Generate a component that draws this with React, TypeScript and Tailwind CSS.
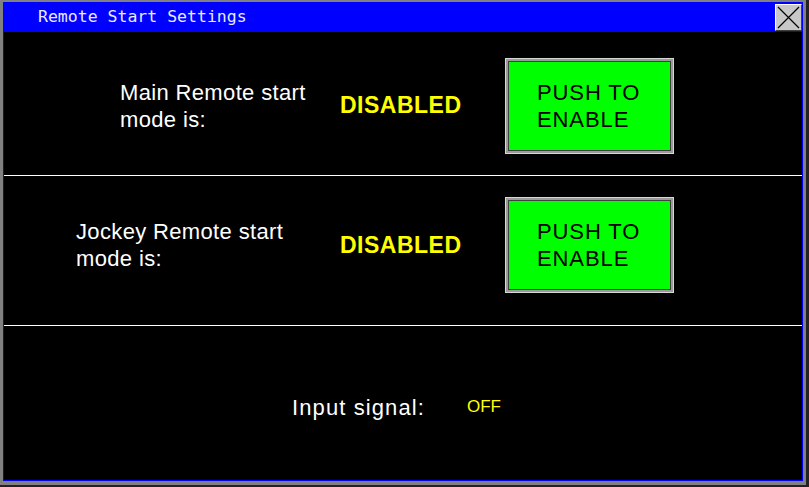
import React from "react";

function EnableButton() {
  return (
    <div className="w-[169px] h-[96px] border border-[#d8d8d8] bg-[#9a9a9a] p-[2px]">
      <div className="w-full h-full border border-[#404040] bg-[#00ff00] flex items-center pl-[28px]">
        <div
          className="text-black text-[22px] leading-[27px] tracking-[0.9px]"
          style={{ fontFamily: '"Liberation Sans", Arial, sans-serif' }}
        >
          PUSH TO
          <br />
          ENABLE
        </div>
      </div>
    </div>
  );
}

function ModeRow({
  lines,
  labelPad,
  labelWidth,
  className,
}: {
  lines: [string, string];
  labelPad: string;
  labelWidth: string;
  className: string;
}) {
  return (
    <div className={`flex items-center ${className}`}>
      <div className={`${labelPad} ${labelWidth} text-white text-[22px] leading-[27px] tracking-[0.35px]`}>
        {lines[0]}
        <br />
        {lines[1]}
      </div>
      <div className="w-[165px] text-[#ffff00] font-bold text-[23px] tracking-[0.5px]">DISABLED</div>
      <EnableButton />
    </div>
  );
}

export default function App() {
  return (
    <div
      className="w-[809px] h-[487px] bg-[#222222]"
      style={{ fontFamily: '"Liberation Sans", Arial, sans-serif' }}
    >
      <div className="w-[806px] h-[485px] border-x-[3px] border-t-[2px] border-b-[4px] border-[#808080]">
        <div className="w-full h-full border border-[#0000ff] bg-black flex flex-col">
          {/* Title bar */}
          <div className="h-[29px] bg-[#0000ff] flex items-center justify-between shrink-0">
            <span
              className="pl-[34px] text-[#e8e8ff] text-[16.5px]"
              style={{ fontFamily: '"DejaVu Sans Mono", monospace' }}
            >
              Remote Start Settings
            </span>
            <div className="w-[27px] h-[27px] bg-[#c8c8c8] border-t border-l border-white border-r border-b border-r-[#404040] border-b-[#404040] flex items-center justify-center">
              <svg width="23" height="23" viewBox="0 0 23 23">
                <path d="M1 1 L22 22 M22 1 L1 22" stroke="#000" strokeWidth="1.2" />
              </svg>
            </div>
          </div>

          <ModeRow
            lines={["Main Remote start", "mode is:"]}
            labelPad="pl-[116px]"
            labelWidth="w-[336px]"
            className="h-[143px] pt-[4px]"
          />
          <div className="h-px bg-white shrink-0" />
          <ModeRow
            lines={["Jockey Remote start", "mode is:"]}
            labelPad="pl-[72px]"
            labelWidth="w-[336px]"
            className="h-[149px] pt-[21px] pb-[32px]"
          />
          <div className="h-px bg-white shrink-0" />

          <div className="flex-1 flex items-center pl-[288px] pt-[8px]">
            <span className="text-white text-[22px] tracking-[1.1px] w-[175px]">Input signal:</span>
            <span className="text-[#ffff00] text-[17px]">OFF</span>
          </div>
        </div>
      </div>
    </div>
  );
}
